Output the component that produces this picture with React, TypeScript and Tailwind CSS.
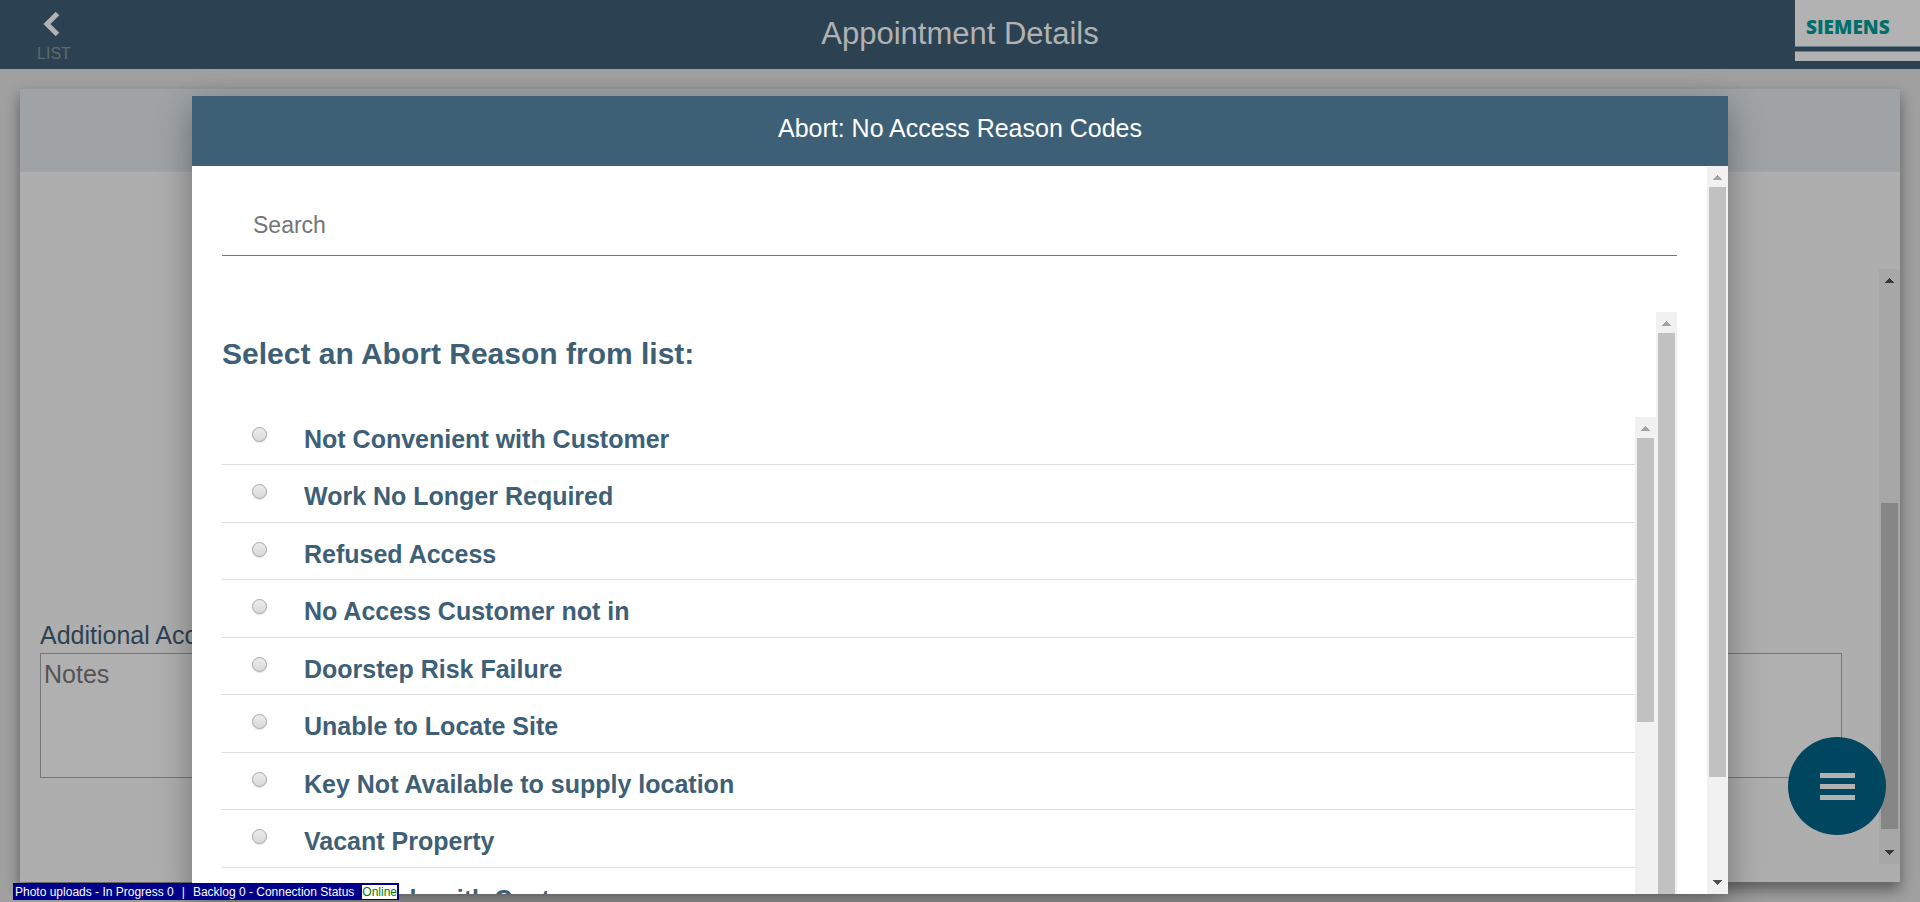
import { useState } from "react";

const reasons = [
  "Not Convenient with Customer",
  "Work No Longer Required",
  "Refused Access",
  "No Access Customer not in",
  "Doorstep Risk Failure",
  "Unable to Locate Site",
  "Key Not Available to supply location",
  "Vacant Property",
  "Previously with Customer",
];

type BarProps = {
  start: number;
  size: number;
  dim?: boolean;
  upActive?: boolean;
  className?: string;
};

function ScrollBar({ start, size, dim, upActive, className }: BarProps) {
  return (
    <div
      aria-hidden="true"
      className={`flex w-[21px] shrink-0 flex-col ${dim ? "bg-[#a7a7a7]" : "bg-[#f1f1f1]"} ${className ?? ""}`}
    >
      <svg className="h-[21px] w-[21px] shrink-0" viewBox="0 0 21 21" shapeRendering="crispEdges">
        <path d="M6 14h9v-1h-1v-1h-1v-1h-1v-1h-1v-1h-1v1h-1v1h-1v1h-1v1h-1z" fill={upActive ? "#373737" : "#a3a3a3"} />
      </svg>
      <div className="flex min-h-0 flex-1 flex-col px-[2px]">
        <div className="shrink-0" style={{ height: `${start}%` }} />
        <div className={`shrink-0 ${dim ? "bg-[#868686]" : "bg-[#c1c1c1]"}`} style={{ height: `${size}%` }} />
      </div>
      <svg className="h-[21px] w-[21px] shrink-0" viewBox="0 0 21 21" shapeRendering="crispEdges">
        <path d="M6 7h9v1h-1v1h-1v1h-1v1h-1v1h-1v-1h-1v-1h-1v-1h-1v-1h-1z" fill={dim ? "#373737" : "#505050"} />
      </svg>
    </div>
  );
}

function TopBar() {
  return (
    <header className="grid h-[69px] shrink-0 grid-cols-[1fr_auto_1fr] bg-[#2c4253] text-[#b2b2b2]">
      <button type="button" className="ml-[37px] flex w-[34px] flex-col items-center justify-self-start pt-[11px]">
        <svg className="mr-[6px]" width="18" height="26" viewBox="0 0 18 26" fill="none" stroke="#b2b2b2" strokeWidth="5">
          <path d="M15.5 2.5 5 13l10.5 10.5" />
        </svg>
        <span className="mt-[7px] text-[16px] leading-[20px] text-[#5f6b6c]">LIST</span>
      </button>
      <h1 className="pt-[16px] text-[31px] leading-[36px]">Appointment Details</h1>
      <div className="flex h-[61px] w-[125px] flex-col justify-self-end bg-[#b2b2b2]">
        <span className="pl-[11px] pt-[15px] font-['Open_Sans',sans-serif] text-[19px] font-extrabold leading-[25px] text-[#006f6c]">
          SIEMENS
        </span>
        <span className="mt-[6px] h-[6px] border-y border-[#6a7f8c] bg-[#2c4253]" />
      </div>
    </header>
  );
}

function DetailsCard() {
  return (
    <main className="mx-[20px] mb-[20px] mt-[20px] flex min-h-0 flex-1 flex-col bg-[#aeaeae] shadow-[0_8px_12px_0_rgba(0,0,0,0.3),0_6px_16px_0_rgba(0,0,0,0.15)]">
      <div className="h-[83px] shrink-0 border-b border-[#a5a5a5] bg-[#9fa3a5]" />
      <div className="mb-[18px] mt-[97px] flex min-h-0 flex-1">
        <div className="flex flex-1 flex-col justify-end pb-[86px] pl-[20px] pr-[37px]">
          <label htmlFor="notes" className="text-[25px] leading-[35px] text-[#2c4253]">
            Additional Access Notes
          </label>
          <textarea
            id="notes"
            placeholder="Notes"
            className="h-[125px] w-full resize-none border border-[#767676] bg-[#b0b0b0] px-[3px] py-[5px] text-[25px] leading-[30px] placeholder:text-[#535353]"
          />
        </div>
        <ScrollBar dim upActive start={38.5} size={59} />
      </div>
    </main>
  );
}

function ReasonDialog() {
  const [selected, setSelected] = useState("");
  return (
    <div
      role="dialog"
      aria-labelledby="dialog-title"
      className="absolute inset-x-[10%] bottom-[8px] top-[96px] flex flex-col bg-white shadow-[0_12px_28px_0_rgba(0,0,0,0.22),0_10px_40px_0_rgba(0,0,0,0.15)]"
    >
      <h2 id="dialog-title" className="h-[70px] shrink-0 bg-[#3d6076] pt-[17px] text-center text-[25px] leading-[30px] text-white">
        Abort: No Access Reason Codes
      </h2>
      <div className="flex min-h-0 flex-1">
        <div className="flex min-w-0 flex-1 flex-col overflow-hidden px-[30px]">
          <input
            type="text"
            aria-label="Search"
            placeholder="Search"
            className="mt-[28px] h-[62px] w-full shrink-0 border-b border-[#767676] px-[31px] pt-[2px] text-[23px] outline-none placeholder:text-[#757575]"
          />
          <div className="mt-[56px] flex shrink-0">
            <div className="flex min-w-0 flex-1 flex-col">
              <h3 className="pt-[24px] text-[30px] font-bold leading-[36px] text-[#3d6076]">Select an Abort Reason from list:</h3>
              <div className="mt-[36px] flex">
                <ul className="grid h-[517px] flex-1 auto-rows-fr">
                  {reasons.map((reason) => (
                    <li key={reason} className="border-b border-[#dddddd]">
                      <label className="flex h-full items-start pl-[30px] pt-[16px] text-[25px] font-bold leading-[30px] text-[#3d6076]">
                        <input
                          type="radio"
                          name="reason"
                          checked={selected === reason}
                          onChange={() => setSelected(reason)}
                          className="mr-[37px] mt-[3px] h-[15px] w-[15px] appearance-none rounded-full border border-[#a6a6a6] bg-linear-to-b from-[#ececec] to-[#d9d9d9] checked:bg-[#3d6076] shadow-[0_1px_1px_rgba(0,0,0,0.12)]"
                        />
                        {reason}
                      </label>
                    </li>
                  ))}
                </ul>
                <ScrollBar start={0} size={61} className="mt-[9px]" />
              </div>
            </div>
            <ScrollBar start={0} size={100} />
          </div>
        </div>
        <ScrollBar start={0} size={86} />
      </div>
    </div>
  );
}

export default function App() {
  return (
    <div className="relative flex h-screen flex-col overflow-hidden bg-[#a0a0a0] font-['Liberation_Sans',Arial,sans-serif]">
      <TopBar />
      <DetailsCard />
      <button
        type="button"
        aria-label="Menu"
        className="absolute bottom-[67px] right-[34px] flex h-[98px] w-[98px] flex-col items-center justify-center gap-[6px] rounded-full bg-[#00465f]"
      >
        <span className="h-[5px] w-[35px] bg-[#b2b2b2]" />
        <span className="h-[5px] w-[35px] bg-[#b2b2b2]" />
        <span className="h-[5px] w-[35px] bg-[#b2b2b2]" />
      </button>
      <ReasonDialog />
      <div className="absolute bottom-[2px] left-[13px] flex h-[17px] items-center gap-[8px] bg-[#00008b] px-[2px] text-[12px] leading-[14px] text-white">
        <span>Photo uploads - In Progress 0</span>
        <span>|</span>
        <span>Backlog 0 - Connection Status</span>
        <span className="bg-white text-[#008000]">Online</span>
      </div>
    </div>
  );
}
